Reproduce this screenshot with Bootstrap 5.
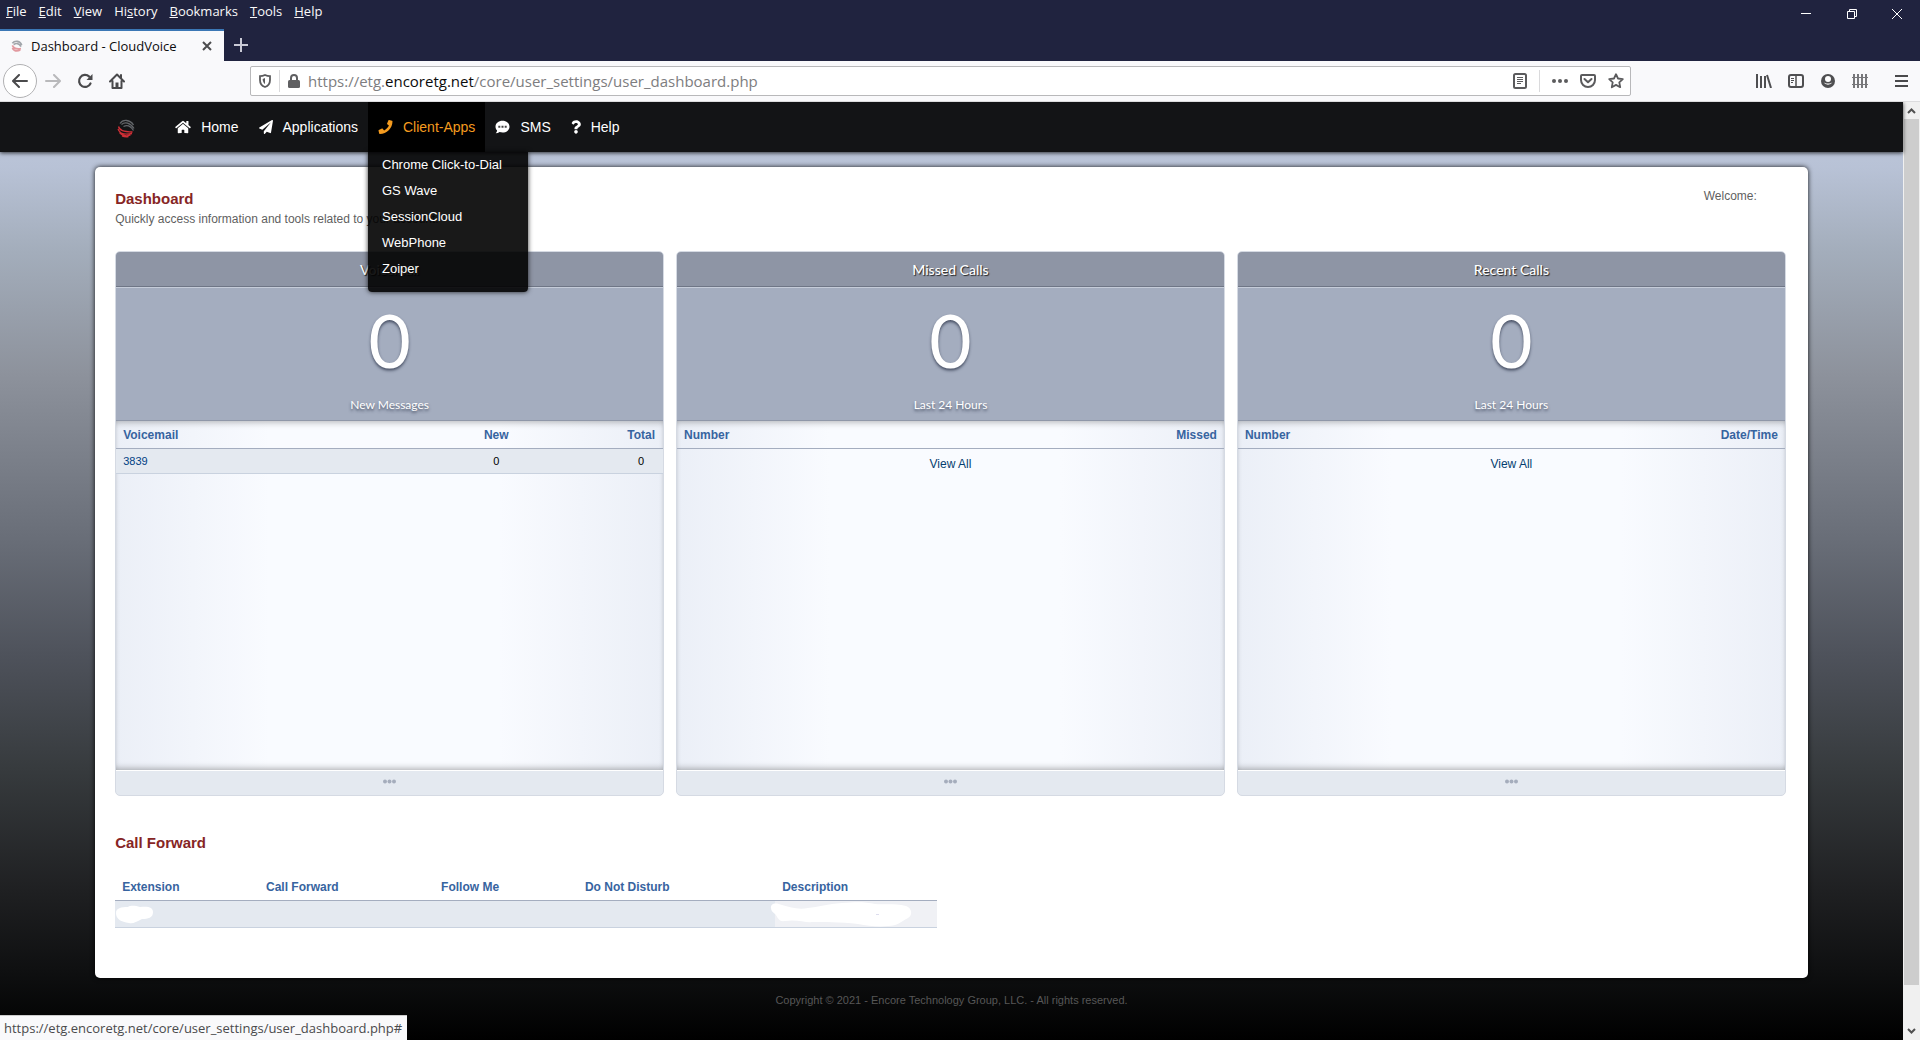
<!DOCTYPE html>
<html lang="en">
<head>
<meta charset="utf-8">
<meta name="viewport" content="width=device-width, initial-scale=1">
<title>Dashboard - CloudVoice</title>
<link rel="stylesheet" href="https://cdn.jsdelivr.net/npm/bootstrap@5.3.0/dist/css/bootstrap.min.css">
<style>
  :root { --ui: "Open Sans", "Noto Sans", sans-serif; --site: "Liberation Sans", Arial, sans-serif; --calm: Lato, "Open Sans", sans-serif; }
  body { font-family: var(--site); font-size: 12px; line-height: 16px; color: #5f5f5f; overflow: hidden; }
  a { text-decoration: none; }
  svg { display: block; flex: none; }
  button { border: 0; background: none; padding: 0; color: inherit; }

  /* browser window */
  .win-top { background: #20233f; color: #f9f9fa; font-family: var(--ui); height: 61px; }
  .menu-row { height: 29px; font-size: 13px; padding-left: 6px; gap: 12px; }
  .menu-row button { line-height: 23px; }
  .win-ctl { gap: 32px; padding: 8px 17px 0 0; }
  .tab-item { width: 224px; height: 32px; background: #f9f9fb; border-top: 2px solid #3b77b5; color: #0c0c0d; padding: 0 12px 0 11px; gap: 8px; font-size: 13px; }
  .new-tab { margin-left: 10px; }
  .tool-row { background: #f9f9fb; height: 41px; border-bottom: 1px solid #dcdcde; color: #58585a; font-family: var(--ui); }
  .tool-left { width: 250px; padding-left: 3px; gap: 8px; }
  .tool-left button { width: 24px; display: flex; justify-content: center; }
  .tool-left .fwd-btn { width: 20px; }
  .tool-left .back-btn { width: 34px; height: 34px; border: 1px solid #b1b1b3; border-radius: 50%; background: #fff; align-items: center; }
  .url-box { height: 30px; background: #fff; border: 1px solid #b8b8ba; border-radius: 2px; font-size: 15px; padding: 0 6px 0 8px; color: #7d7d80; }
  .url-box b { font-weight: 400; color: #0c0c0d; }
  .url-acts { gap: 12px; }
  .bar-sep { width: 1px; height: 22px; background: #dadadc; }
  .tool-right { width: 289px; padding-right: 12px; gap: 11px; }

  /* page */
  .site { background: linear-gradient(#c1cadd, #b8c2d6 7%, #a3adbb 16%, #8d929c 29%, #686d77 47%, #4e525b 59%, #373b3e 71%, #1f2022 84%, #0e0f10 93%, #000); }
  .site-nav { height: 50px; background: #131416; box-shadow: 0 1px 4px rgba(0,0,0,.75); padding: 0 calc(5% + 22px); font-size: 14px; z-index: 3; }
  .site-nav .brand-link { width: 48px; padding-top: 2px; }
  .site-nav .nav-link { color: #fff; height: 50px; padding: 0 10px; gap: 10px; }
  .site-nav .nav-link.active { background: #000; color: #f49b1f; }
  .apps-menu { position: absolute; top: 50px; left: 0; width: 160px; height: 140px; padding: 0; margin: 0; list-style: none; background: rgba(0,0,0,.9); border-radius: 0 0 4px 4px; box-shadow: 0 0 5px rgba(0,0,0,.8); font-size: 13px; }
  .apps-menu a { display: block; color: #fff; line-height: 26px; padding-left: 14px; }
  .sheet { width: 90%; margin: 15px auto 0; background: #fff; border-radius: 5px; box-shadow: 0 0 5px rgba(0,0,0,.9); padding: 21px 22px 50px 20px; }
  .heading { font-size: 15px; line-height: 21px; font-weight: 700; color: #862525; margin: 0; }
  .intro { margin: 2px 0 0; }
  .welcome { padding-right: 29px; }
  .widgets { gap: 12px; margin-top: 24px; }
  .widget { flex: 1 1 0; border: 1px solid #d5dae3; border-radius: 5px; overflow: hidden; background: #e4e9f0; }
  .w-head { height: 35px; background: #8e95a5; color: #fff; font-family: var(--calm); font-size: 14px; line-height: 35px; border-bottom: 1px solid #6f7686; text-shadow: 1px 1px 1px #222; margin: 0; }
  .w-count { height: 134px; background: #a4adbf; border-top: 1px solid #c5ccd9; border-bottom: 1px solid #8f97a8; color: #fff; font-family: var(--calm); text-shadow: 0 2px 3px rgba(40,48,70,.75); padding-top: 18px; }
  .w-num { font-size: 73px; line-height: 68px; }
  .w-note { font-size: 12px; line-height: 18px; margin-top: 22px; }
  .w-body { height: 349px; background: linear-gradient(90deg, #ebeff7, #f9fbff 28%, #f9fbff 70%, #ebeff7); box-shadow: inset 0 5px 7px -4px rgba(0,0,0,.3), inset 0 -5px 7px -4px rgba(0,0,0,.35); }
  .w-foot { height: 25px; border-top: 1px solid #fff; color: #a5adbc; padding-bottom: 4px; width: 100%; }
  .grid-t { width: 100%; border-collapse: collapse; }
  .grid-t th { color: #3764a0; font-weight: 700; border-bottom: 1px solid #a4adbf; padding: 6px 7px 5px; }
  .grid-t td { background: #e4e9f0; border-bottom: 1px solid #c9d2df; height: 25px; padding: 0 7px; font-size: 11px; color: #000; }
  .grid-t a { color: #004083; }
  .vm-a { width: 47%; } .vm-b { width: 45%; } .vm-c { width: 8%; }
  .cf-a { width: 17.5%; } .cf-b { width: 21.3%; } .cf-d { width: 24%; }
  .view-all { display: block; padding-top: 6px; line-height: 18px; color: #053e70; }
  .forward-head { margin-top: 36px; }
  .forward { width: 49.2%; margin-top: 20px; table-layout: fixed; }
  .forward td { height: 27px; padding: 0; }
  .forward td:last-child { background: #f0f1f5; }
  .copy { color: #575757; padding-top: 14px; font-size: 11px; }
  .scroll-rail { width: 17px; background: #f0f0f0; padding: 0 1px; color: #505050; }
  .scroll-thumb { background: #cdcdcd; flex: 1 1 0; margin-bottom: 42px; }
  .status-tip { position: absolute; left: 0; bottom: 0; height: 25px; background: #f9f9fb; color: #4a4a4c; font-family: var(--ui); font-size: 13px; line-height: 24px; padding: 0 5px 0 4px; border-top: 1px solid #ccc; z-index: 5; }
</style>
<script src="https://cdn.jsdelivr.net/npm/bootstrap@5.3.0/dist/js/bootstrap.bundle.min.js"></script>
</head>
<body class="d-flex flex-column vh-100 position-relative">

<header>
  <div class="win-top">
    <div class="d-flex justify-content-between">
      <div class="menu-row d-flex align-items-start">
        <button><u>F</u>ile</button><button><u>E</u>dit</button><button><u>V</u>iew</button><button>Hi<u>s</u>tory</button><button><u>B</u>ookmarks</button><button><u>T</u>ools</button><button><u>H</u>elp</button>
      </div>
      <div class="win-ctl d-flex align-items-start">
        <button aria-label="Minimize"><svg width="14" height="12" stroke="#fff"><path d="M2 5.500h10"/></svg></button>
        <button aria-label="Restore"><svg width="14" height="12" fill="none" stroke="#fff"><path d="M2.500 3.500h7v7h-7zM4.500 3.500v-2h7v7h-2"/></svg></button>
        <button aria-label="Close"><svg width="12" height="12" stroke="#fff"><path d="M1 1l10 10M11 1L1 11"/></svg></button>
      </div>
    </div>
    <div class="d-flex align-items-center">
      <div class="tab-item d-flex align-items-center">
        <svg width="12" height="12" viewBox="0 0 18 18" fill="none" stroke-width="2.500"><g stroke="#a2a6ab"><path d="M2 5c4-5 12-4 14 3M4 7c4-3 8-2 11 3"/></g><g stroke="#e29aa0"><path d="M2 8c2 5 7 6 13 5M2 12c3 5 8 5 12 3"/></g></svg>
        <span class="flex-grow-1">Dashboard - CloudVoice</span>
        <button aria-label="Close tab"><svg width="10" height="10" stroke="#4c4c4e" stroke-width="2"><path d="M1 1l8 8M9 1L1 9"/></svg></button>
      </div>
      <button aria-label="New tab" class="new-tab"><svg width="14" height="14" stroke="#c9cad6" stroke-width="2"><path d="M7 0v14M0 7h14"/></svg></button>
    </div>
  </div>

  <div class="tool-row d-flex align-items-center">
    <div class="tool-left d-flex align-items-center">
      <button class="back-btn" aria-label="Back"><svg width="16" height="14" fill="none" stroke="#4a4a4c" stroke-width="2" stroke-linecap="round" stroke-linejoin="round"><path d="M15 7H1.500M7 1L1 7l6 6"/></svg></button>
      <button aria-label="Forward" class="fwd-btn justify-content-start"><svg width="16" height="14" fill="none" stroke="#b9b9bb" stroke-width="2" stroke-linecap="round" stroke-linejoin="round"><path d="M1 7h13.500M9 1l6 6-6 6"/></svg></button>
      <button aria-label="Reload"><svg width="16" height="16" fill="none" stroke="#4a4a4c" stroke-width="2.200" stroke-linecap="round"><path d="M13.500 10.500A6 6 0 1 1 12.200 3.600"/><path d="M15.500 1v6H9.500z" fill="#4a4a4c" stroke="none"/></svg></button>
      <button aria-label="Home"><svg width="16" height="16" fill="none" stroke="#4a4a4c" stroke-width="2" stroke-linecap="round" stroke-linejoin="round"><path d="M1 8.500L8 1.500l7 7M3.500 8v7h9V8M12 2v3"/><path d="M6.500 9.500h3V15h-3z" fill="#4a4a4c" stroke="none"/></svg></button>
    </div>
    <div class="url-box d-flex align-items-center flex-grow-1">
      <svg width="12" height="14" fill="none" stroke="#5b5b5d" stroke-width="1.800"><path d="M6 1C4 2 2.500 2.200 1 2.200V6c0 3.500 2 6 5 7 3-1 5-3.500 5-7V2.200C9.500 2.200 8 2 6 1z"/><path d="M6 4v6C4.500 9 3.700 7.500 3.700 5z" fill="#5b5b5d" stroke="none"/></svg>
      <span class="bar-sep ms-2"></span>
      <svg class="ms-2 me-2" width="12" height="14" fill="#5f5f61"><rect y="6" width="12" height="8" rx="1.500"/><path d="M3 7V4a3 3 0 0 1 6 0v3" fill="none" stroke="#5f5f61" stroke-width="2"/></svg>
      <div class="flex-grow-1" role="textbox" contenteditable="true" spellcheck="false" aria-label="Address">https://etg.<b>encoretg.net</b>/core/user_settings/user_dashboard.php</div>
      <div class="url-acts d-flex align-items-center">
        <button aria-label="Reader view"><svg width="14" height="16" fill="none" stroke="#5b5b5d"><rect x="1" y="1" width="12" height="14" rx="1.500" stroke-width="2"/><path d="M4 4.500h6M4 6.500h6M4 8.500h6M4 10.500h4"/></svg></button>
        <span class="bar-sep"></span>
        <button aria-label="Page actions"><svg width="16" height="4" fill="#5b5b5d"><circle cx="2" cy="2" r="2"/><circle cx="8" cy="2" r="2"/><circle cx="14" cy="2" r="2"/></svg></button>
        <button aria-label="Pocket"><svg width="16" height="14" fill="none" stroke="#5b5b5d" stroke-width="2" stroke-linecap="round" stroke-linejoin="round"><path d="M2 1h12a1 1 0 0 1 1 1v4a7 7 0 0 1-14 0V2a1 1 0 0 1 1-1z"/><path d="M4.500 5L8 8.300 11.500 5"/></svg></button>
        <button aria-label="Bookmark"><svg width="16" height="16" fill="none" stroke="#5b5b5d" stroke-width="1.800" stroke-linejoin="round"><path d="M8 1.200l2 4.300 4.800.6-3.500 3.200.9 4.900L8 11.900l-4.200 2.300.9-4.900L1.200 6.100 6 5.500z"/></svg></button>
      </div>
    </div>
    <div class="tool-right d-flex align-items-center justify-content-end">
      <div class="d-flex align-items-center gap-3">
        <button aria-label="Library"><svg width="16" height="14" fill="none" stroke="#4f4f51" stroke-width="2"><path d="M1 0v14M5 2v12M9 2v12M11 1l4 13"/></svg></button>
        <button aria-label="Sidebar"><svg width="16" height="14" fill="none" stroke="#4f4f51" stroke-width="2"><rect x="1" y="1" width="14" height="12" rx="2"/><path d="M8 1v12" stroke-width="1.500"/><path d="M3 4.500h3M3 6.500h3M3 8.500h2" stroke-width="1"/></svg></button>
        <button aria-label="Account"><svg width="16" height="16" viewBox="0 0 16 16"><circle cx="8" cy="8" r="7" fill="#4f4f51"/><circle cx="8" cy="6" r="3" fill="#fff"/><path d="M3.500 9.200a5 4.300 0 0 0 9 0c-2 1.800-7 1.800-9 0z" fill="#fff"/></svg></button>
        <button aria-label="Extension"><svg width="16" height="14" stroke="#77777a" stroke-width="2"><path d="M2 0v14M6 0v14M10 0v14M14 0v14"/><path d="M0 3.500h16M0 10.500h16" stroke-width="1"/></svg></button>
      </div>
      <span class="bar-sep h-75 me-1"></span>
      <button aria-label="Menu"><svg width="13" height="12" stroke="#4a4a4c" stroke-width="2"><path d="M0 1h13M0 6h13M0 11h13"/></svg></button>
    </div>
  </div>
</header>

<div class="d-flex flex-grow-1 overflow-hidden">
  <div class="site flex-grow-1">
    <nav class="site-nav d-flex align-items-center position-relative">
      <a href="#" class="brand-link" aria-label="CloudVoice"><svg width="19" height="19" fill="none" stroke-width="1.300"><g stroke="#64676b"><path d="M3 4.500C6 0 13 .5 16.500 6M4.500 5.500C8 2.500 13 3.500 17 9.500M6.500 7.500c4-2 7.500 0 10 4"/></g><g stroke="#cf2f36"><path d="M1.500 7.500c1 4 5 5 14 5.500M1 10c2 5 8 6 14 4.500M2.500 13.500c3 3.500 7 4 11 2.500M5 16.800c2 1 4 1.200 6.500.8"/></g></svg></a>
      <ul class="nav">
        <li><a href="#" class="nav-link d-flex align-items-center"><svg width="16" height="14" viewBox="0 0 576 512" fill="currentColor"><path d="M280.370 148.260L96 300.110V464a16 16 0 0 0 16 16l112.060-.29a16 16 0 0 0 15.920-16V368a16 16 0 0 1 16-16h64a16 16 0 0 1 16 16v95.640a16 16 0 0 0 16 16.050L464 480a16 16 0 0 0 16-16V300L295.670 148.260a12.190 12.190 0 0 0-15.300 0zM571.600 251.470L488 182.560V44.050a12 12 0 0 0-12-12h-56a12 12 0 0 0-12 12v72.610L318.470 43a48 48 0 0 0-61 0L4.340 251.470a12 12 0 0 0-1.600 16.900l25.500 31A12 12 0 0 0 45.150 301l235.220-193.740a12.190 12.190 0 0 1 15.300 0L530.900 301a12 12 0 0 0 16.900-1.600l25.500-31a12 12 0 0 0-1.700-16.930z"/></svg>Home</a></li>
        <li><a href="#" class="nav-link d-flex align-items-center"><svg width="14" height="14" viewBox="0 0 512 512" fill="currentColor"><path d="M476 3.200L12.500 270.600c-18.100 10.400-15.800 35.600 2.200 43.200L121 358.400l287.300-253.200c5.500-4.900 13.300 2.600 8.600 8.300L176 407v80.500c0 23.600 28.500 32.900 42.500 15.800L282 426l124.600 52.200c14.200 6 30.400-2.900 33-18.200l72-432C515 7.800 493.300-6.800 476 3.200z"/></svg>Applications</a></li>
        <li class="position-relative"><a href="#" class="nav-link active d-flex align-items-center"><svg width="15" height="14" viewBox="0 0 512 512" fill="currentColor"><path d="M493.400 24.600l-104-24c-11.300-2.600-22.900 3.300-27.500 13.900l-48 112c-4.200 9.800-1.400 21.300 6.900 28l60.600 49.600c-36 76.700-98.900 140.500-177.200 177.200l-49.600-60.600c-6.800-8.300-18.200-11.100-28-6.900l-112 48C3.900 366.500-2 378.100.6 389.400l24 104C27.100 504.200 36.700 512 48 512c256.100 0 464-207.500 464-464 0-11.200-7.700-20.900-18.600-23.400z"/></svg>Client-Apps</a>
          <ul class="apps-menu">
            <li><a href="#">Chrome Click-to-Dial</a></li>
            <li><a href="#">GS Wave</a></li>
            <li><a href="#">SessionCloud</a></li>
            <li><a href="#">WebPhone</a></li>
            <li><a href="#">Zoiper</a></li>
          </ul></li>
        <li><a href="#" class="nav-link d-flex align-items-center"><svg width="15" height="14" viewBox="0 0 14 14"><path d="M7 .8c3.900 0 7 2.600 7 5.900s-3.100 5.900-7 5.900c-1 0-2-.2-2.900-.5C3 12.900 1.700 13.300.3 13.300c.7-.8 1.200-1.800 1.300-2.900C.6 9.400 0 8.100 0 6.700 0 3.400 3.100.8 7 .8z" fill="#fff"/><path d="M2.800 6.700h2M6 6.700h2M9.200 6.700h2" stroke="#444" stroke-width="2"/></svg>SMS</a></li>
        <li><a href="#" class="nav-link d-flex align-items-center"><svg width="10" height="14" viewBox="0 0 384 512" fill="currentColor"><path d="M202.021 0C122.202 0 70.503 32.703 29.914 91.026c-7.363 10.580-5.093 25.086 5.178 32.874l43.138 32.709c10.373 7.865 25.132 6.026 33.253-4.148 25.049-31.381 43.630-49.449 82.757-49.449 30.764 0 68.816 19.799 68.816 49.631 0 22.552-18.617 34.134-48.993 51.164-35.423 19.860-82.299 44.576-82.299 106.405V320c0 13.255 10.745 24 24 24h72.471c13.255 0 24-10.745 24-24v-5.773c0-42.860 125.268-44.645 125.268-160.627C377.504 66.256 286.902 0 202.021 0zM192 373.459c-38.196 0-69.271 31.075-69.271 69.271 0 38.195 31.075 69.270 69.271 69.270s69.271-31.075 69.271-69.271-31.075-69.270-69.271-69.270z"/></svg>Help</a></li>
      </ul>
    </nav>

    <main class="sheet">
      <div class="d-flex justify-content-between align-items-start">
        <div>
          <h1 class="heading">Dashboard</h1>
          <p class="intro">Quickly access information and tools related to your account.</p>
        </div>
        <span class="welcome">Welcome:</span>
      </div>

      <div class="widgets d-flex">
        <section class="widget">
          <h2 class="w-head text-center">Voicemail</h2>
          <div class="w-count text-center"><div class="w-num">0</div><div class="w-note">New Messages</div></div>
          <div class="w-body">
            <table class="grid-t">
              <colgroup><col class="vm-a"><col class="vm-b"><col class="vm-c"></colgroup>
              <thead><tr><th>Voicemail</th><th class="text-center">New</th><th class="text-center">Total</th></tr></thead>
              <tbody><tr><td><a href="#">3839</a></td><td class="text-center">0</td><td class="text-center">0</td></tr></tbody>
            </table>
          </div>
          <button class="w-foot d-flex align-items-center justify-content-center" aria-label="Details"><svg width="13" height="5" fill="currentColor"><circle cx="2" cy="2.500" r="2"/><circle cx="6.500" cy="2.500" r="2"/><circle cx="11" cy="2.500" r="2"/></svg></button>
        </section>
        <section class="widget">
          <h2 class="w-head text-center">Missed Calls</h2>
          <div class="w-count text-center"><div class="w-num">0</div><div class="w-note">Last 24 Hours</div></div>
          <div class="w-body">
            <table class="grid-t"><thead><tr><th>Number</th><th class="text-end">Missed</th></tr></thead></table>
            <a href="#" class="view-all text-center">View All</a>
          </div>
          <button class="w-foot d-flex align-items-center justify-content-center" aria-label="Details"><svg width="13" height="5" fill="currentColor"><circle cx="2" cy="2.500" r="2"/><circle cx="6.500" cy="2.500" r="2"/><circle cx="11" cy="2.500" r="2"/></svg></button>
        </section>
        <section class="widget">
          <h2 class="w-head text-center">Recent Calls</h2>
          <div class="w-count text-center"><div class="w-num">0</div><div class="w-note">Last 24 Hours</div></div>
          <div class="w-body">
            <table class="grid-t"><thead><tr><th>Number</th><th class="text-end">Date/Time</th></tr></thead></table>
            <a href="#" class="view-all text-center">View All</a>
          </div>
          <button class="w-foot d-flex align-items-center justify-content-center" aria-label="Details"><svg width="13" height="5" fill="currentColor"><circle cx="2" cy="2.500" r="2"/><circle cx="6.500" cy="2.500" r="2"/><circle cx="11" cy="2.500" r="2"/></svg></button>
        </section>
      </div>

      <h2 class="heading forward-head">Call Forward</h2>
      <table class="grid-t forward">
        <colgroup><col class="cf-a"><col class="cf-b"><col class="cf-a"><col class="cf-d"><col></colgroup>
        <thead><tr><th>Extension</th><th>Call Forward</th><th>Follow Me</th><th>Do Not Disturb</th><th>Description</th></tr></thead>
        <tbody><tr>
          <td><svg width="40" height="20" fill="#fff"><path d="M1 9c0-5 5-6 12-6 3-2 8-1 12 0 8-1 13 0 13 5 0 6-5 7-11 7-6 3-9 5-13 4C6 18 1 15 1 9z"/></svg></td>
          <td></td><td></td><td></td>
          <td><svg width="140" height="26" fill="#fff" overflow="visible"><path d="M-4 8c-1-7 6-6 11-4 8 2 16 5 26 3 10-1 20-4 34-5 14-1 24-1 33 1 8 1 18-1 31 2 6 2 7 9 2 12-8 4-10 8-20 8-9 1-20 0-30-2-18-2-35-2-45-2-8 1-16-3-28-1-7 1-7-4-10-7-2-2-4-3-4-6z"/><path d="M101 13.500h3" stroke="#dde"/></svg></td>
        </tr></tbody>
      </table>
    </main>
    <footer class="copy text-center">Copyright © 2021 - Encore Technology Group, LLC. - All rights reserved.</footer>
  </div>

  <div class="scroll-rail d-flex flex-column flex-shrink-0 align-items-center" aria-hidden="true">
    <svg class="mt-1 mb-1" width="9" height="9" fill="none" stroke="currentColor" stroke-width="2"><path d="M1 7l3.500-3.500L8 7"/></svg>
    <div class="scroll-thumb w-100"></div>
    <svg class="mb-1" width="9" height="9" fill="none" stroke="currentColor" stroke-width="2"><path d="M1 2l3.500 3.500L8 2"/></svg>
  </div>
</div>

<div class="status-tip" role="status">https://etg.encoretg.net/core/user_settings/user_dashboard.php#</div>
</body>
</html>
